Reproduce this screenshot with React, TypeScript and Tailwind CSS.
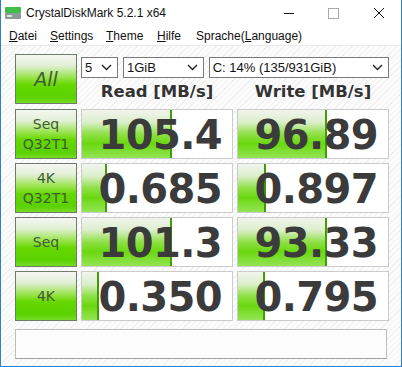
import React from 'react'

interface Row {
  l1: string
  l2?: string
  read: string
  write: string
  readBar: number
  writeBar: number
}

const rows: Row[] = [
  { l1: 'Seq', l2: 'Q32T1', read: '105.4', write: '96.89', readBar: 90, writeBar: 89 },
  { l1: '4K', l2: 'Q32T1', read: '0.685', write: '0.897', readBar: 25, writeBar: 28 },
  { l1: 'Seq', read: '101.3', write: '93.33', readBar: 90, writeBar: 89 },
  { l1: '4K', read: '0.350', write: '0.795', readBar: 17, writeBar: 27 },
]

const btnClass =
  'flex flex-col items-center justify-center border border-[#6f7a68] bg-[linear-gradient(to_bottom,#f5f6f4_0%,#e2f0d6_22%,#9be450_46%,#66d800_62%,#5ad200_88%,#78dc28_100%)] text-[#3f5c34] [font-family:"DejaVu_Sans",sans-serif] leading-[20px]'

function Select({ width, label }: { width: string; label: string }) {
  return (
    <div className={`${width} h-[21px] flex items-center justify-between border border-[#7a7a7a] bg-white pl-[3px] pr-[5px] text-[13px] text-[#111]`}>
      <span>{label}</span>
      <svg width="11" height="7" viewBox="0 0 11 7">
        <polyline points="1,1 5.5,5.5 10,1" fill="none" stroke="#222" strokeWidth="1.4" />
      </svg>
    </div>
  )
}

function Value({ text, bar }: { text: string; bar: number }) {
  return (
    <div className="relative h-[50px] border border-[#cbcbcb] bg-white overflow-hidden">
      <div
        className="absolute left-0 top-0 bottom-0 border-r-2 border-[#3f9e08] bg-[linear-gradient(to_bottom,#f2f4ef_0%,#dcefcc_25%,#8fe046_50%,#6ad810_70%,#94e454_100%)]"
        style={{ width: bar }}
      />
      <div className="relative flex h-full items-center justify-end pr-[10px] pt-[2px] text-[40px] font-bold tracking-[-0.6px] text-[#3b3b3b] [font-family:'DejaVu_Sans',sans-serif]">
        {text}
      </div>
    </div>
  )
}

export default function App() {
  return (
    <div className="w-[402px] h-[367px] flex flex-col border-x border-b border-[#2f7fd1] bg-white [font-family:'Liberation_Sans',Arial,sans-serif] overflow-hidden">
      {/* title bar */}
      <div className="h-[26px] flex items-center shrink-0">
        <svg className="ml-[3px]" width="18" height="14" viewBox="0 0 18 14">
          <rect x="1" y="1" width="16" height="6" rx="1" fill="#3fbf4a" />
          <rect x="1" y="7" width="16" height="6" rx="1" fill="#8c9a9a" />
          <rect x="3" y="9" width="5" height="2" fill="#d8e8e0" />
        </svg>
        <span className="ml-[4px] text-[12px] text-[#111]">CrystalDiskMark 5.2.1 x64</span>
        <div className="ml-auto flex items-center">
          <div className="w-[45px] flex justify-center">
            <div className="w-[10px] h-px bg-[#111]" />
          </div>
          <div className="w-[45px] flex justify-center">
            <div className="w-[11px] h-[11px] border border-[#aaa]" />
          </div>
          <div className="w-[45px] flex justify-center">
            <svg width="12" height="12" viewBox="0 0 12 12">
              <path d="M1 1 L11 11 M11 1 L1 11" stroke="#111" strokeWidth="1" />
            </svg>
          </div>
        </div>
      </div>

      {/* menu */}
      <div className="h-[20px] flex items-center pl-[8px] text-[12px] text-[#111] border-b border-[#ebebeb] shrink-0">
        <span className="w-[41px]"><u>D</u>atei</span>
        <span className="w-[56px]"><u>S</u>ettings</span>
        <span className="w-[51px]"><u>T</u>heme</span>
        <span className="w-[39px]"><u>H</u>ilfe</span>
        <span>Sprache(<u>L</u>anguage)</span>
      </div>

      {/* client */}
      <div className="flex-1 px-[14px] pt-[8px] bg-[repeating-linear-gradient(135deg,#f1f1f1_0px,#f1f1f1_1px,#fcfcfc_1px,#fcfcfc_4px)]">
        <div className="grid grid-cols-[62px_152px_152px] gap-x-[4px] gap-y-[4px]">
          <div className={`${btnClass} h-[50px] text-[19px] italic`}>All</div>
          <div className="col-span-2 flex flex-col">
            <div className="flex gap-[5px] pt-[3px]">
              <Select width="w-[37px]" label="5" />
              <Select width="w-[81px]" label="1GiB" />
              <Select width="w-[181px]" label="C: 14% (135/931GiB)" />
            </div>
            <div className="flex flex-1 items-center text-[16.5px] font-bold text-[#333] [font-family:'DejaVu_Sans',sans-serif]">
              <div className="w-[152px] text-center pt-[2px]">Read [MB/s]</div>
              <div className="w-[4px]" />
              <div className="w-[152px] text-center pt-[2px]">Write [MB/s]</div>
            </div>
          </div>

          {rows.map((r, i) => (
            <React.Fragment key={i}>
              <div className={`${btnClass} h-[50px] text-[14px]`}>
                <span>{r.l1}</span>
                {r.l2 && <span>{r.l2}</span>}
              </div>
              <Value text={r.read} bar={r.readBar} />
              <Value text={r.write} bar={r.writeBar} />
            </React.Fragment>
          ))}
        </div>

        <div className="mt-[8px] h-[30px] border border-[#bdbdbd] border-b-[#a0a0a0] bg-[#fdfdfd]" />
      </div>
    </div>
  )
}
